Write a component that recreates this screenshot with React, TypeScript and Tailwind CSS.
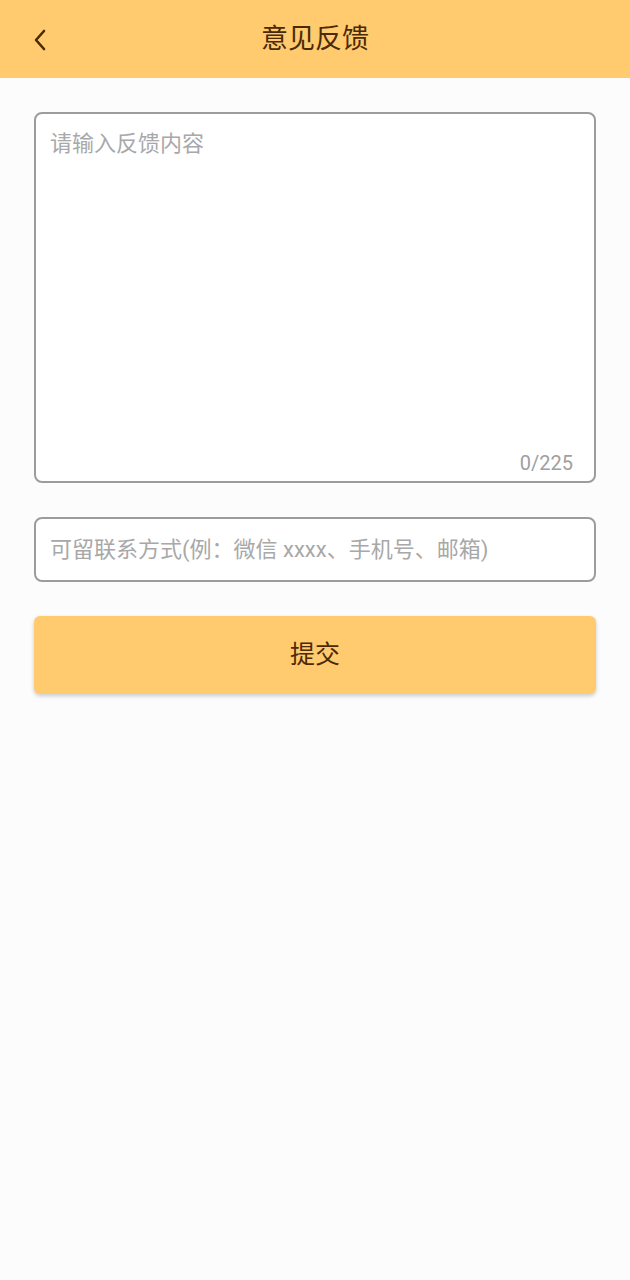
import React from "react";

export default function App() {
  return (
    <div className="min-h-[1280px] w-[630px] bg-[#fcfcfc] font-['Roboto','Noto_Sans_CJK_SC',sans-serif]">
      <header className="relative flex h-[78px] items-center justify-center bg-[#ffcb6e]">
        <button className="absolute left-[28px] top-[25px] flex h-[30px] w-[24px] items-center justify-center">
          <svg width="14" height="22" viewBox="0 0 14 22" fill="none">
            <path d="M11 2 L3 11 L11 20" stroke="#4a2a08" strokeWidth="2.6" strokeLinecap="round" strokeLinejoin="round" />
          </svg>
        </button>
        <h1 className="text-[27px] leading-none text-[#4a2a08]">意见反馈</h1>
      </header>
      <main className="flex flex-col px-[34px] pt-[34px]">
        <div className="relative h-[371px] rounded-[8px] border-2 border-[#9c9c9c] bg-white">
          <div className="px-[14px] pt-[16px] text-[22px] leading-[28px] text-[#a8a8a8]">请输入反馈内容</div>
          <div className="absolute bottom-[6px] right-[21px] text-[20px] leading-[24px] text-[#a0a0a0]">0/225</div>
        </div>
        <div className="mt-[34px] flex h-[65px] items-center rounded-[8px] border-2 border-[#9c9c9c] bg-white px-[14px]">
          <span className="text-[22px] leading-[28px] text-[#a8a8a8]">可留联系方式(例：微信 xxxx、手机号、邮箱)</span>
        </div>
        <button className="mt-[34px] flex h-[78px] items-center justify-center rounded-[6px] bg-[#ffcb6e] text-[25px] text-[#4a2a08] shadow-[0_2px_4px_rgba(0,0,0,0.2)]">
          提交
        </button>
      </main>
    </div>
  );
}
